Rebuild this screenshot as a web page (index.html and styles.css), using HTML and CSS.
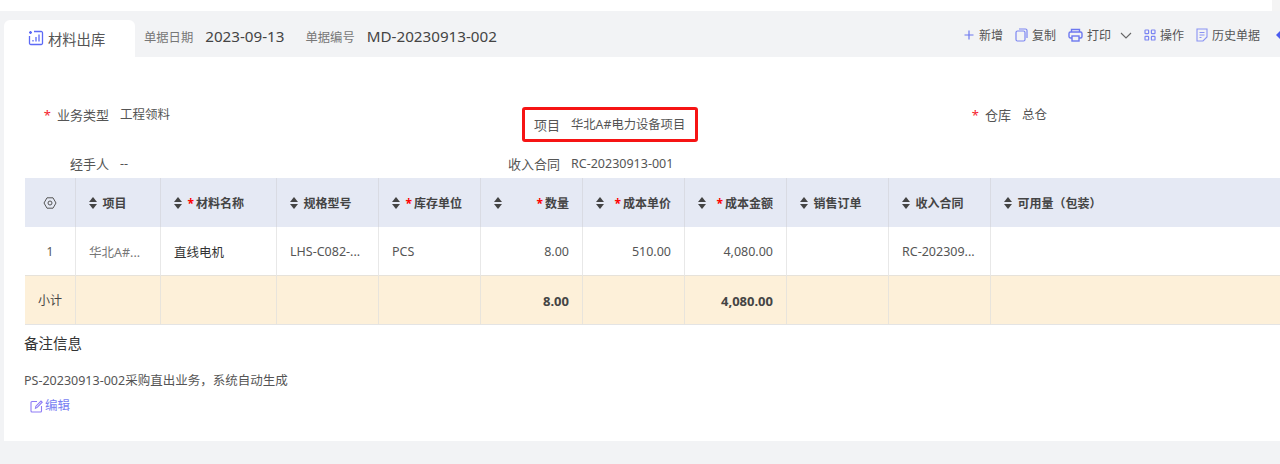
FILE: index.html
```html
<!DOCTYPE html>
<html lang="zh-CN">
  <head>
    <meta charset="UTF-8" />
    <title>材料出库</title>
    <link rel="stylesheet" href="styles.css">
  </head>
  <body>
    <div class="top-strip"><span class="top-scroll"></span></div>

    <!-- Header band: tab, document meta, actions -->
    <header class="head-bar">
      <div class="tab">
        <svg class="tab-icon" width="16" height="16" viewBox="0 0 16 16" fill="none" stroke="#5d6af5" stroke-width="1.3">
          <path d="M6 1.5h7.2a1.3 1.3 0 0 1 1.3 1.3v10.4a1.3 1.3 0 0 1-1.3 1.3H2.8a1.3 1.3 0 0 1-1.3-1.3V6" />
          <path d="M5 11.5v-1.5M8 11.5V7M11 11.5V4.5" />
          <path d="M1 2.5h3M2.5 1v3" />
        </svg>
        <span>材料出库</span>
      </div>
      <div class="meta">
        <span class="meta-label">单据日期</span>
        <span class="meta-value">2023-09-13</span>
      </div>
      <div class="meta">
        <span class="meta-label">单据编号</span>
        <span class="meta-value">MD-20230913-002</span>
      </div>

      <nav class="actions">
        <a class="action">
          <svg width="12" height="12" viewBox="0 0 12 12" fill="none" stroke="#6d78f0" stroke-width="1.2"><path d="M6 1.5v9M1.5 6h9" /></svg>
          新增
        </a>
        <a class="action">
          <svg width="13" height="14" viewBox="0 0 13 14" fill="none" stroke="#7c86f2" stroke-width="1.2"><rect x="1" y="3" width="9" height="10" rx="1.5" /><path d="M4 1h6.5A1.5 1.5 0 0 1 12 2.5V10" /></svg>
          复制
        </a>
        <a class="action action-print">
          <svg width="15" height="14" viewBox="0 0 15 14" fill="none" stroke="#6d78f0" stroke-width="1.4"><path d="M3.5 4V1.5h8V4" /><rect x="1" y="4" width="13" height="6" rx="1.5" /><rect x="4" y="8" width="7" height="5" fill="#f2f3f5" /></svg>
          打印
        </a>
        <svg class="action-caret" width="12" height="7" viewBox="0 0 12 7" fill="none" stroke="#666" stroke-width="1.1"><path d="M1 1l5 5 5-5" /></svg>
        <a class="action">
          <svg width="12" height="12" viewBox="0 0 12 12" fill="none" stroke="#7c86f2" stroke-width="1.2"><rect x="1" y="1" width="3.6" height="3.6" rx=".6" /><rect x="7.4" y="1" width="3.6" height="3.6" rx=".6" /><rect x="1" y="7.4" width="3.6" height="3.6" rx=".6" /><rect x="7.4" y="7.4" width="3.6" height="3.6" rx=".6" /></svg>
          操作
        </a>
        <a class="action">
          <svg width="12" height="14" viewBox="0 0 12 14" fill="none" stroke="#8a93f3" stroke-width="1.1"><path d="M1 1h10v8l-4 4H1z" /><path d="M3.5 4.5h5M3.5 7h5M3.5 9.5h2" /></svg>
          历史单据
        </a>
        <svg class="action-cut" width="12" height="10" viewBox="0 0 12 10"><path d="M0 5l4-4v8z" fill="#4a5cf0" /></svg>
      </nav>
    </header>

    <main class="sheet">
      <section class="form-grid">
        <div class="field">
          <label class="field-label"><i class="req">*</i>业务类型</label>
          <span class="field-value">工程领料</span>
        </div>
        <div class="field field-marked">
          <label class="field-label">项目</label>
          <span class="field-value">华北A#电力设备项目</span>
        </div>
        <div class="field">
          <label class="field-label"><i class="req">*</i>仓库</label>
          <span class="field-value">总仓</span>
        </div>
        <div class="field">
          <label class="field-label">经手人</label>
          <span class="field-value">--</span>
        </div>
        <div class="field">
          <label class="field-label">收入合同</label>
          <span class="field-value">RC-20230913-001</span>
        </div>
      </section>

      <table class="grid">
        <colgroup>
          <col class="c-idx"><col class="c-proj"><col class="c-name"><col class="c-std"><col class="c-std"><col class="c-std"><col class="c-std"><col class="c-std"><col class="c-std"><col class="c-std"><col class="c-rest">
        </colgroup>
        <thead>
          <tr>
            <th class="idx">
              <svg class="gear" width="14" height="14" viewBox="0 0 14 14" fill="none" stroke="#555" stroke-width="1" stroke-linejoin="round"><path d="M4 1.8h6L13 7l-3 5.2H4L1 7z" /><circle cx="7" cy="7" r="2" /></svg>
            </th>
            <th><div class="th"><i class="sort"></i><span class="th-text">项目</span></div></th>
            <th><div class="th"><i class="sort"></i><span class="th-text"><i class="star">*</i>材料名称</span></div></th>
            <th><div class="th"><i class="sort"></i><span class="th-text">规格型号</span></div></th>
            <th><div class="th"><i class="sort"></i><span class="th-text"><i class="star">*</i>库存单位</span></div></th>
            <th><div class="th th-num"><i class="sort"></i><span class="th-text"><i class="star">*</i>数量</span></div></th>
            <th><div class="th th-num"><i class="sort"></i><span class="th-text"><i class="star">*</i>成本单价</span></div></th>
            <th><div class="th th-num"><i class="sort"></i><span class="th-text"><i class="star">*</i>成本金额</span></div></th>
            <th><div class="th"><i class="sort"></i><span class="th-text">销售订单</span></div></th>
            <th><div class="th"><i class="sort"></i><span class="th-text">收入合同</span></div></th>
            <th><div class="th"><i class="sort"></i><span class="th-text">可用量（包装）</span></div></th>
          </tr>
        </thead>
        <tbody>
          <tr>
            <td class="idx">1</td>
            <td class="muted">华北A#...</td>
            <td class="dark">直线电机</td>
            <td>LHS-C082-...</td>
            <td>PCS</td>
            <td class="num">8.00</td>
            <td class="num">510.00</td>
            <td class="num">4,080.00</td>
            <td></td>
            <td>RC-202309...</td>
            <td></td>
          </tr>
        </tbody>
        <tfoot>
          <tr>
            <td class="idx">小计</td>
            <td></td>
            <td></td>
            <td></td>
            <td></td>
            <td class="num">8.00</td>
            <td></td>
            <td class="num">4,080.00</td>
            <td></td>
            <td></td>
            <td></td>
          </tr>
        </tfoot>
      </table>

      <section class="remark">
        <h3 class="remark-title">备注信息</h3>
        <p class="remark-text">PS-20230913-002采购直出业务，系统自动生成</p>
        <a class="edit-link">
          <svg width="13" height="13" viewBox="0 0 13 13" fill="none" stroke="#8f7cf5" stroke-width="1.1"><path d="M7 1.5H2a1 1 0 0 0-1 1V11a1 1 0 0 0 1 1h8.5a1 1 0 0 0 1-1V6" /><path d="M5.5 8.2l.4-2L11 1l1.2 1.2-5 5.2z" /></svg>
          编辑
        </a>
      </section>
    </main>
  </body>
</html>
```

FILE: styles.css
```css
html, body {
  height: 100%;
}

body {
  margin: 0;
  background: #f2f3f5;
  color: #555;
  font-family: "Noto Sans", "Noto Sans CJK SC", sans-serif;
  font-size: 12px;
  overflow: hidden;
}

i {
  font-style: normal;
}

.top-strip {
  height: 11px;
  background: #fff;
  display: flex;
  justify-content: flex-end;
}

.top-scroll {
  width: 8px;
  background: #f4f4f4;
}

/* Header band */
.head-bar {
  height: 46px;
  display: flex;
  align-items: flex-end;
  padding-left: 4px;
  white-space: nowrap;
}

.tab {
  width: 131px;
  height: 37px;
  box-sizing: border-box;
  padding: 0 0 1px 24px;
  display: flex;
  align-items: center;
  gap: 4px;
  background: #fff;
  border-radius: 6px 6px 0 0;
  font-size: 14.3px;
  color: #555;
}

.meta {
  height: 46px;
  padding-top: 4px;
  box-sizing: border-box;
  display: flex;
  align-items: center;
  gap: 12px;
  margin-left: 9px;
  margin-right: 12px;
}

.meta-label {
  color: #777;
  font-size: 12.3px;
  position: relative;
  top: 1px;
}

.meta-value {
  color: #444;
  font-size: 15.2px;
}

.actions {
  height: 46px;
  padding-top: 2px;
  box-sizing: border-box;
  margin-left: auto;
  display: flex;
  align-items: center;
  gap: 12px;
  margin-right: -8px;
}

.action {
  display: flex;
  align-items: center;
  gap: 4px;
  color: #555;
}

.action-print + .action-caret {
  margin-left: -3px;
}

.action-cut {
  margin-left: 4px;
}

/* Sheet */
.sheet {
  height: 384px;
  margin-left: 4px;
  background: #fff;
  overflow: hidden;
}

.form-grid {
  display: grid;
  grid-template-columns: repeat(3, 451px);
  align-content: start;
  row-gap: 14px;
  padding-top: 50px;
  height: 121px;
  box-sizing: border-box;
}

.field {
  display: flex;
  line-height: 16px;
  gap: 11px;
  font-size: 12.5px;
}

.field-label {
  width: 105px;
  text-align: right;
  color: #555;
  font-size: 13px;
  flex: none;
}

.field-value {
  color: #555;
}

.req {
  color: #f5222d;
  margin-right: 6px;
}

/* annotation box drawn around the project field */
.field-marked {
  width: 176px;
  height: 35px;
  box-sizing: border-box;
  margin-left: 67px;
  padding-left: 9px;
  align-items: center;
  border: 3px solid #f61414;
  border-radius: 3px;
}

.field-marked .field-label {
  width: auto;
}

.field-marked .field-value {
  font-size: 12.3px;
}

/* Table, last column runs past the window edge */
.grid {
  width: 1265px;
  margin-left: 21px;
  table-layout: fixed;
  border-collapse: separate;
  border-spacing: 0;
}

.c-idx { width: 51px; }
.c-proj { width: 85px; }
.c-name { width: 116px; }
.c-std { width: 102px; }
.c-rest { width: 299px; }

.grid th,
.grid td {
  box-sizing: border-box;
  padding: 0 13px;
  border-right: 1px solid #e8e8e8;
  white-space: nowrap;
  overflow: hidden;
}

.grid th {
  height: 49px;
  padding-left: 12.5px;
  background: #e5e9f4;
  border-right-color: #d9dbe3;
  font-weight: 700;
  color: #444;
  text-align: left;
}

.grid tbody td {
  height: 49px;
  font-size: 12.5px;
  border-bottom: 1px solid #e6e2da;
}

.grid tfoot td {
  height: 49px;
  padding-top: 1px;
  background: #fdf0d9;
  border-right-color: #e8e4dc;
  border-bottom: 1px solid #e4e4e4;
  font-weight: 700;
  font-size: 13px;
  color: #444;
}

.grid .idx {
  padding: 0;
  text-align: center;
  font-weight: 400;
  font-size: 12px;
}

.gear {
  display: block;
  margin: 0 auto;
}

.grid .num {
  text-align: right;
}

.grid .muted {
  color: #777;
}

.grid .dark {
  color: #333;
}

.th {
  display: flex;
  align-items: center;
  gap: 6px;
}

.th-num {
  justify-content: space-between;
}

.sort {
  width: 8px;
  height: 12px;
  flex: none;
  position: relative;
}

.sort::before,
.sort::after {
  content: "";
  position: absolute;
  left: 0;
  border-left: 4px solid transparent;
  border-right: 4px solid transparent;
}

.sort::before {
  top: 0;
  border-bottom: 5px solid #444;
}

.sort::after {
  bottom: 0;
  border-top: 5px solid #444;
}

.star {
  color: #f00;
  margin-right: 2px;
}

/* Remark */
.remark {
  padding-left: 20px;
}

.remark-title {
  margin: 8px 0 0;
  font-size: 14.5px;
  font-weight: 400;
  line-height: 20px;
  color: #333;
}

.remark-text {
  margin: 19px 0 0;
  line-height: 18px;
  font-size: 12.5px;
  color: #555;
}

.edit-link {
  display: flex;
  align-items: center;
  gap: 2px;
  margin: 7px 0 0 6px;
  line-height: 18px;
  font-size: 12.5px;
  color: #7a7ff2;
}
```
